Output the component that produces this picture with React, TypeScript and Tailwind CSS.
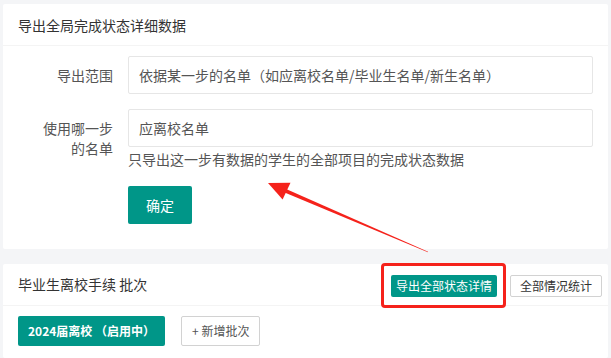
import React from 'react';

const font = { fontFamily: '"Noto Sans CJK SC", "Noto Sans", sans-serif' };

export default function App() {
  return (
    <div className="relative min-h-[358px] bg-[#f4f5f7] px-[3px] pt-[4px] text-[14px] text-[#333]" style={font}>
      <div className="rounded-[2px] bg-white">
        <div className="h-[42px] border-b border-[#f4f4f4] px-[15px] leading-[42px]">导出全局完成状态详细数据</div>
        <div className="px-[15px] pt-[10px] pb-[10px]">
          <div className="mb-[15px] flex">
            <label className="w-[110px] shrink-0 px-[15px] py-[9px] text-right leading-[20px] text-[#555]">导出范围</label>
            <input
              readOnly
              value="依据某一步的名单（如应离校名单/毕业生名单/新生名单）"
              className="h-[38px] flex-1 rounded-[2px] border border-[#e6e6e6] px-[10px] text-[#555] outline-none"
            />
          </div>
          <div className="mb-[15px] flex">
            <label className="w-[110px] shrink-0 px-[15px] py-[9px] text-right leading-[20px] text-[#555]">使用哪一步的名单</label>
            <div className="flex-1">
              <input
                readOnly
                value="应离校名单"
                className="h-[38px] w-full rounded-[2px] border border-[#e6e6e6] px-[10px] text-[#555] outline-none"
              />
              <div className="leading-[24px] text-[#555]">只导出这一步有数据的学生的全部项目的完成状态数据</div>
            </div>
          </div>
          <div className="mb-[15px] pl-[110px]">
            <button className="h-[38px] rounded-[2px] bg-[#009688] px-[18px] text-white">确定</button>
          </div>
        </div>
      </div>

      <div className="mt-[15px] rounded-[2px] bg-white">
        <div className="flex h-[42px] items-center border-b border-[#f4f4f4] pl-[15px] pr-[6px]">
          <span className="flex-1">毕业生离校手续 批次</span>
          <button className="mt-[3px] h-[22px] rounded-[2px] bg-[#009688] px-[5px] text-[12px] leading-[22px] text-white">导出全部状态详情</button>
          <button className="ml-[13px] mt-[3px] h-[22px] rounded-[2px] border border-[#d2d2d2] bg-white px-[9px] text-[12px] leading-[20px] text-[#333]">全部情况统计</button>
        </div>
        <div className="flex gap-[16px] px-[15px] pt-[10px] pb-[12px]">
          <button className="h-[30px] rounded-[2px] bg-[#009688] px-[10px] text-[12px] font-bold text-white">2024届离校 （启用中）</button>
          <button className="h-[30px] rounded-[2px] border border-[#d2d2d2] bg-white px-[10px] text-[12px] text-[#555]">+ 新增批次</button>
        </div>
      </div>

      <div className="pointer-events-none absolute left-[381px] top-[263px] h-[45px] w-[125px] rounded-[4px] border-[3px] border-[#f5221b]" />
      <svg className="pointer-events-none absolute left-0 top-0" width="611" height="358" viewBox="0 0 611 358">
        <polygon points="428.1,251.7 427.9,252.3 282.2,191.6 283.8,187.9" fill="#f5221b" />
        <polygon points="268,183 290.5,182.8 282.6,199.5" fill="#f5221b" />
      </svg>
    </div>
  );
}
